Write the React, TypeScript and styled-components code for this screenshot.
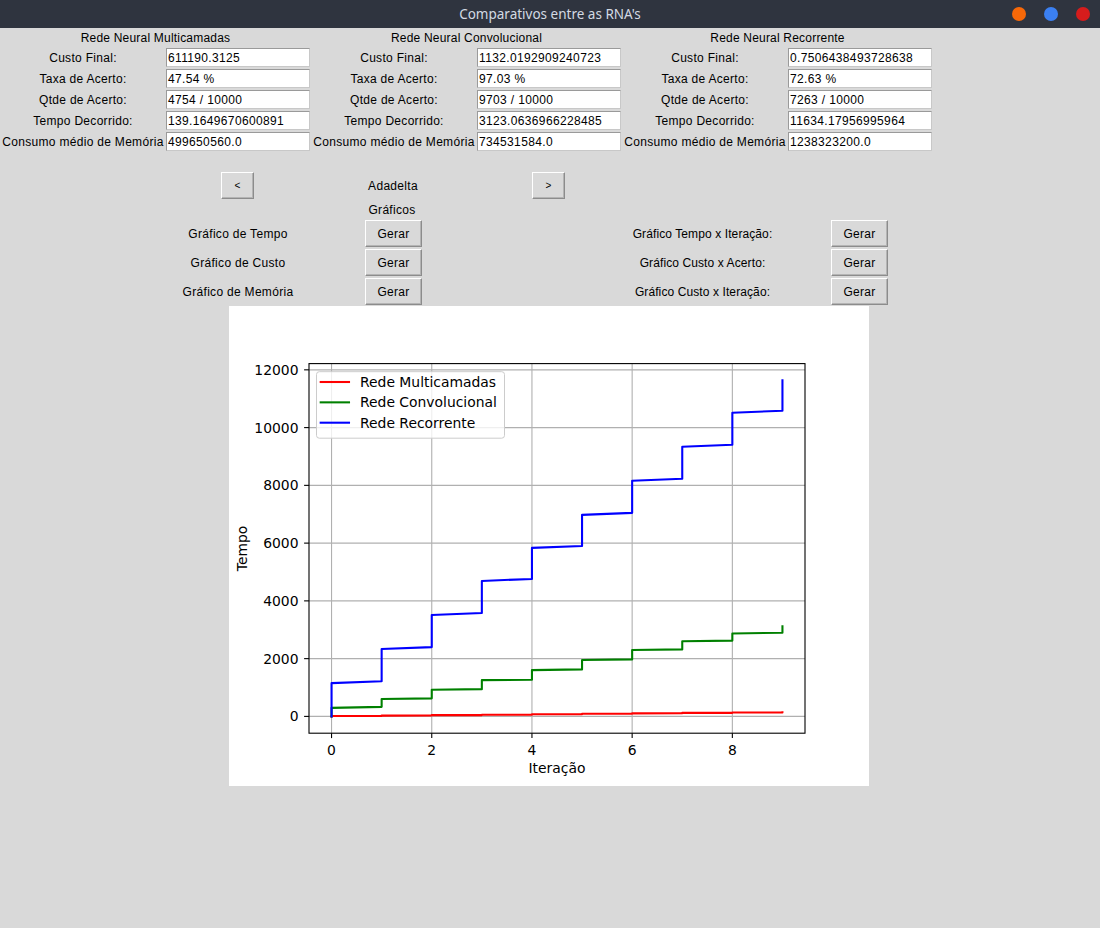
import React from "react";
import styled, { createGlobalStyle } from "styled-components";

const GlobalStyle = createGlobalStyle`
  html, body {
    margin: 0;
    padding: 0;
    background: #d9d9d9;
  }
  body {
    width: 1100px;
    height: 928px;
    overflow: hidden;
    font-family: "Liberation Sans", Arial, sans-serif;
  }
`;

type Stat = { label: string; value: string };
type Network = { title: string; stats: Stat[] };

const networks: Network[] = [
  {
    title: "Rede Neural Multicamadas",
    stats: [
      { label: "Custo Final:", value: "611190.3125" },
      { label: "Taxa de Acerto:", value: "47.54 %" },
      { label: "Qtde de Acerto:", value: "4754 / 10000" },
      { label: "Tempo Decorrido:", value: "139.1649670600891" },
      { label: "Consumo médio de Memória", value: "499650560.0" },
    ],
  },
  {
    title: "Rede Neural Convolucional",
    stats: [
      { label: "Custo Final:", value: "1132.0192909240723" },
      { label: "Taxa de Acerto:", value: "97.03 %" },
      { label: "Qtde de Acerto:", value: "9703 / 10000" },
      { label: "Tempo Decorrido:", value: "3123.0636966228485" },
      { label: "Consumo médio de Memória", value: "734531584.0" },
    ],
  },
  {
    title: "Rede Neural Recorrente",
    stats: [
      { label: "Custo Final:", value: "0.7506438493728638" },
      { label: "Taxa de Acerto:", value: "72.63 %" },
      { label: "Qtde de Acerto:", value: "7263 / 10000" },
      { label: "Tempo Decorrido:", value: "11634.17956995964" },
      { label: "Consumo médio de Memória", value: "1238323200.0" },
    ],
  },
];

const leftCharts = ["Gráfico de Tempo", "Gráfico de Custo", "Gráfico de Memória"];
const rightCharts = [
  "Gráfico Tempo x Iteração:",
  "Gráfico Custo x Acerto:",
  "Gráfico Custo x Iteração:",
];

// series read off the plot: two points per iteration (step shape)
const steps = (pairs: [number, number][]) => {
  const pts: [number, number][] = [];
  pairs.forEach(([a, b], i) => {
    pts.push([i, a]);
    pts.push([i, b]);
  });
  return pts;
};

const series = [
  {
    name: "Rede Multicamadas",
    color: "#ff0000",
    points: steps([
      [0, 13], [15, 28], [30, 43], [45, 58], [60, 74],
      [76, 90], [92, 105], [107, 121], [123, 136], [137, 139.16],
    ]),
  },
  {
    name: "Rede Convolucional",
    color: "#008000",
    points: steps([
      [0, 296], [330, 605], [625, 922], [944, 1256], [1268, 1603],
      [1627, 1952], [1974, 2297], [2320, 2600], [2625, 2870], [2895, 3123.06],
    ]),
  },
  {
    name: "Rede Recorrente",
    color: "#0000ff",
    points: steps([
      [0, 1152], [1220, 2332], [2400, 3510], [3580, 4690], [4760, 5834],
      [5900, 6979], [7048, 8158], [8228, 9337], [9406, 10516], [10585, 11634.18],
    ]),
  },
];

const AX = { left: 80, right: 576, top: 57.6, bottom: 427.2 };
const X_MIN = -0.45;
const X_MAX = 9.45;
const Y_MIN = -581.7;
const Y_MAX = 12215.9;

const px = (v: number) =>
  AX.left + ((v - X_MIN) / (X_MAX - X_MIN)) * (AX.right - AX.left);
const py = (v: number) =>
  AX.bottom - ((v - Y_MIN) / (Y_MAX - Y_MIN)) * (AX.bottom - AX.top);

const xTicks = [0, 2, 4, 6, 8];
const yTicks = [0, 2000, 4000, 6000, 8000, 10000, 12000];

export default function App() {
  return (
    <Window>
      <GlobalStyle />
      <TitleBar>
        <TitleText>Comparativos entre as RNA's</TitleText>
        <Dots>
          <Dot $color="#f76808" />
          <Dot $color="#3b80f2" />
          <Dot $color="#d61c1c" />
        </Dots>
      </TitleBar>

      <StatsPanel>
        {networks.map((n) => (
          <StatColumn key={n.title}>
            <Heading>{n.title}</Heading>
            {n.stats.map((s) => (
              <StatRow key={s.label}>
                <Label>{s.label}</Label>
                <Field>{s.value}</Field>
              </StatRow>
            ))}
          </StatColumn>
        ))}
      </StatsPanel>

      <NavRow>
        <NavButton>&lt;</NavButton>
        <NavLabel>Adadelta</NavLabel>
        <NavButton>&gt;</NavButton>
      </NavRow>

      <SectionTitle>Gráficos</SectionTitle>

      <ChartGrid>
        {leftCharts.map((l, i) => (
          <React.Fragment key={l}>
            <Label>{l}</Label>
            <GerarButton>Gerar</GerarButton>
            <span />
            <Label $tight>{rightCharts[i]}</Label>
            <GerarButton>Gerar</GerarButton>
          </React.Fragment>
        ))}
      </ChartGrid>

      <PlotArea>
        <svg width="640" height="480" viewBox="0 0 640 480">
          <rect x="0" y="0" width="640" height="480" fill="#fff" />
          {/* grid */}
          {xTicks.map((t) => (
            <line key={`gx${t}`} x1={px(t)} x2={px(t)} y1={AX.top} y2={AX.bottom} stroke="#b0b0b0" strokeWidth="1.1" />
          ))}
          {yTicks.map((t) => (
            <line key={`gy${t}`} x1={AX.left} x2={AX.right} y1={py(t)} y2={py(t)} stroke="#b0b0b0" strokeWidth="1.1" />
          ))}
          {/* series */}
          {series.map((s) => (
            <polyline
              key={s.name}
              points={s.points.map(([x, y]) => `${px(x).toFixed(2)},${py(y).toFixed(2)}`).join(" ")}
              fill="none"
              stroke={s.color}
              strokeWidth="2.08"
              strokeLinejoin="round"
              strokeLinecap="square"
            />
          ))}
          {/* frame */}
          <rect x={AX.left} y={AX.top} width={AX.right - AX.left} height={AX.bottom - AX.top} fill="none" stroke="#000" strokeWidth="1.1" />
          {/* ticks */}
          {xTicks.map((t) => (
            <g key={`tx${t}`}>
              <line x1={px(t)} x2={px(t)} y1={AX.bottom} y2={AX.bottom + 4.9} stroke="#000" strokeWidth="1.1" />
              <TickText x={px(t)} y={448.5} textAnchor="middle">{t}</TickText>
            </g>
          ))}
          {yTicks.map((t) => (
            <g key={`ty${t}`}>
              <line x1={AX.left - 4.9} x2={AX.left} y1={py(t)} y2={py(t)} stroke="#000" strokeWidth="1.1" />
              <TickText x={69.5} y={py(t) + 5} textAnchor="end">{t}</TickText>
            </g>
          ))}
          <TickText x={(AX.left + AX.right) / 2} y={467} textAnchor="middle">Iteração</TickText>
          <TickText x={0} y={0} textAnchor="middle" transform={`translate(17.5 ${(AX.top + AX.bottom) / 2}) rotate(-90)`}>Tempo</TickText>
          {/* legend */}
          <rect x="87.5" y="65.7" width="188" height="66.5" rx="2.8" fill="#fff" fillOpacity="0.8" stroke="#cccccc" strokeWidth="1" />
          {series.map((s, i) => (
            <g key={`lg${s.name}`}>
              <line x1="91.7" x2="120" y1={76 + i * 20.35} y2={76 + i * 20.35} stroke={s.color} strokeWidth="2.08" strokeLinecap="square" />
              <TickText x="131" y={76 + i * 20.35 + 5}>{s.name}</TickText>
            </g>
          ))}
        </svg>
      </PlotArea>
    </Window>
  );
}

const Window = styled.div`
  width: 1100px;
  height: 928px;
  display: flex;
  flex-direction: column;
  background: #d9d9d9;
  color: #000;
`;

const TitleBar = styled.div`
  height: 28px;
  flex: none;
  background: #2f343f;
  display: flex;
  align-items: center;
  justify-content: center;
  position: relative;
`;

const TitleText = styled.span`
  font-family: "Noto Sans", "DejaVu Sans", sans-serif;
  font-size: 13.5px;
  color: #d3dae3;
`;

const Dots = styled.div`
  position: absolute;
  right: 10px;
  top: 7px;
  display: flex;
  gap: 18px;
`;

const Dot = styled.span<{ $color: string }>`
  width: 14px;
  height: 14px;
  border-radius: 50%;
  background: ${(p) => p.$color};
`;

const StatsPanel = styled.div`
  display: grid;
  grid-template-columns: repeat(3, 311px);
`;

const StatColumn = styled.div`
  display: flex;
  flex-direction: column;
  gap: 2px;
`;

const Heading = styled.div`
  height: 18px;
  display: flex;
  align-items: center;
  justify-content: center;
  font-size: 12px;
  letter-spacing: 0.2px;
  margin-top: 1px;
  margin-bottom: -1px;
`;

const StatRow = styled.div`
  display: grid;
  grid-template-columns: 166px 144px;
  height: 19px;
`;

const Label = styled.div<{ $tight?: boolean }>`
  display: flex;
  align-items: center;
  justify-content: center;
  font-size: 12px;
  letter-spacing: ${(p) => (p.$tight ? "0.1px" : "0.3px")};
  white-space: nowrap;
`;

const Field = styled.div`
  box-sizing: border-box;
  background: #fff;
  border: 1px solid #9a9a9a;
  border-right-color: #c8c8c8;
  border-bottom-color: #c8c8c8;
  padding-left: 1px;
  font-size: 12px;
  letter-spacing: 0.35px;
  display: flex;
  align-items: center;
  white-space: nowrap;
`;

const RaisedButton = styled.button`
  box-sizing: border-box;
  background: #d9d9d9;
  border: 1px solid #8c8c8c;
  border-top-color: #ffffff;
  border-left-color: #ffffff;
  box-shadow: inset -1px -1px 0 #b4b4b4;
  padding: 0;
  margin: 0;
  font-family: "Liberation Sans", Arial, sans-serif;
  font-size: 12px;
  letter-spacing: 0.3px;
  color: #000;
`;

const NavRow = styled.div`
  display: flex;
  margin: 21px 0 0 221px;
  height: 27px;
`;

const NavButton = styled(RaisedButton)`
  width: 33px;
  height: 27px;
  font-size: 10px;
`;

const NavLabel = styled.div`
  width: 278px;
  display: flex;
  align-items: center;
  justify-content: center;
  font-size: 12px;
  letter-spacing: 0.3px;
`;

const SectionTitle = styled.div`
  width: 278px;
  margin-left: 253px;
  height: 21px;
  display: flex;
  align-items: center;
  justify-content: center;
  font-size: 12px;
  letter-spacing: 0.3px;
`;

const ChartGrid = styled.div`
  display: grid;
  grid-template-columns: 254px 57px 152px 257px 57px;
  grid-auto-rows: 27px;
  row-gap: 2px;
  margin-left: 111px;
`;

const GerarButton = styled(RaisedButton)`
  width: 57px;
  height: 27px;
`;

const PlotArea = styled.div`
  display: flex;
  justify-content: center;
  margin-top: 1px;
  svg {
    display: block;
    margin-left: -2px;
  }
`;

const TickText = styled.text`
  font-family: "DejaVu Sans", sans-serif;
  font-size: 13.9px;
  fill: #000;
`;
